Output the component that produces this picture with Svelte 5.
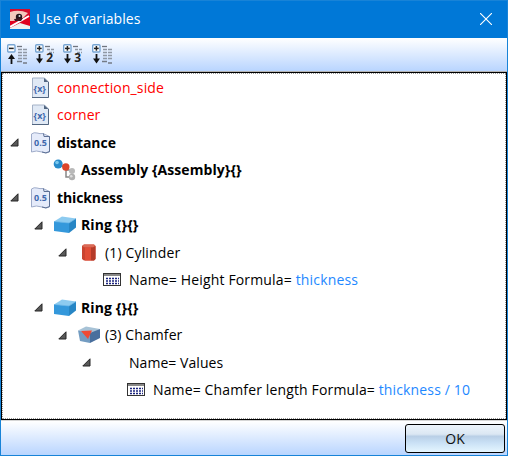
<script lang="ts">
	type Part = { text: string; link?: boolean };
	type Row = {
		depth: number;
		icon: string;
		parts: Part[];
		open?: boolean;
		bold?: boolean;
		missing?: boolean;
		spacing: number;
	};

	const tools = [
		{ name: 'Collapse all', level: '', up: true },
		{ name: 'Expand to level 2', level: '2', up: false },
		{ name: 'Expand to level 3', level: '3', up: false },
		{ name: 'Expand all', level: '', up: false }
	];

	const rows: Row[] = [
		{ depth: 0, icon: 'unknown', parts: [{ text: 'connection_side' }], missing: true, spacing: 0.12 },
		{ depth: 0, icon: 'unknown', parts: [{ text: 'corner' }], missing: true, spacing: 0.05 },
		{ depth: 0, icon: 'number', parts: [{ text: 'distance' }], open: true, bold: true, spacing: -0.05 },
		{ depth: 1, icon: 'assembly', parts: [{ text: 'Assembly {Assembly}{}' }], bold: true, spacing: 0.07 },
		{ depth: 0, icon: 'number', parts: [{ text: 'thickness' }], open: true, bold: true, spacing: -0.12 },
		{ depth: 1, icon: 'part', parts: [{ text: 'Ring {}{}' }], open: true, bold: true, spacing: 0.12 },
		{ depth: 2, icon: 'cylinder', parts: [{ text: '(1) Cylinder' }], open: true, spacing: 0.15 },
		{
			depth: 3,
			icon: 'table',
			parts: [{ text: 'Name= Height Formula= ' }, { text: 'thickness', link: true }],
			spacing: 0.16
		},
		{ depth: 1, icon: 'part', parts: [{ text: 'Ring {}{}' }], open: true, bold: true, spacing: 0.12 },
		{ depth: 2, icon: 'chamfer', parts: [{ text: '(3) Chamfer' }], open: true, spacing: 0.1 },
		{ depth: 3, icon: '', parts: [{ text: 'Name= Values' }], open: true, spacing: 0.05 },
		{
			depth: 4,
			icon: 'table',
			parts: [{ text: 'Name= Chamfer length Formula= ' }, { text: 'thickness / 10', link: true }],
			spacing: 0.14
		}
	];
</script>

<div class="window">
	<header class="titlebar">
		<svg class="logo" width="20" height="20" viewBox="0 0 20 20">
			<rect width="20" height="20" fill="#d40b2b" />
			<path d="M0 3Q9 0 18 4L10 12L0 13Z" fill="#f3c9bd" />
			<path d="M0 12Q9 13 20 5V20H0Z" fill="#df001f" />
			<path d="M0 18L19 7" stroke="#fff" stroke-width="2" />
			<path d="M0 19L10 14L20 17V20H0Z" fill="#eee" />
			<circle cx="9" cy="8" r="3.2" fill="#24151b" />
			<circle cx="9.5" cy="7" r="1" fill="#dce3e8" />
			<path d="M4 10L13 9L11 12H5Z" fill="#421620" />
		</svg>
		<h1>Use of variables</h1>
		<button class="close" aria-label="Close">
			<svg width="12" height="12" viewBox="0 0 12 12">
				<path d="M0 0L12 12M12 0L0 12" stroke="#fff" stroke-width="1.1" />
			</svg>
		</button>
	</header>

	<div class="toolbar">
		{#each tools as tool (tool.name)}
			<button class="tool" class:wide={tool.level === '3'} aria-label={tool.name}>
				<svg width="21" height="21" viewBox="0 0 21 21">
					<rect x=".7" y=".7" width="7.3" height="7.3" rx="1" fill="#fff" stroke="#77a5d3" stroke-width="1.4" />
					<path d="M2 4.4H6.7" stroke="#222" stroke-width="1.5" />
					{#if !tool.up}
						<path d="M4.4 2V6.7" stroke="#222" stroke-width="1.5" />
					{/if}
					{#if tool.up}
						<path d="M4.5 12V20" stroke="#111" stroke-width="1.8" />
						<path d="M4.5 10L8 15H1Z" fill="#111" />
					{:else}
						<path d="M4.5 10V17" stroke="#111" stroke-width="1.8" />
						<path d="M4.5 19.5L8 14.5H1Z" fill="#111" />
					{/if}
					<path d="M10 2.5H15" stroke="#70767f" stroke-width="1.3" />
					{#if tool.level}
						<path d="M12 5.5H19M14 8.5H19" stroke="#9098a4" stroke-width="1.3" stroke-dasharray="3 1" />
						<text x="11.3" y="18">{tool.level}</text>
					{:else}
						<path
							d="M11 5.5H20M11 8.5H20M11 11.5H20M11 14.5H20"
							stroke="#9098a4"
							stroke-width="1.3"
							stroke-dasharray="4 1"
						/>
						<path d="M10 17.5H15M16 19H20" stroke="#747b86" stroke-width="1.3" />
					{/if}
				</svg>
			</button>
		{/each}
	</div>

	<div class="tree" role="tree">
		<div class="focus">
			{#each rows as row}
				<div class="row" style:padding-left="{row.depth * 24}px">
					<span class="arrow">
						{#if row.open}
							<svg width="9" height="9" viewBox="0 0 9 9">
								<path d="M8 .8V8H.8Z" fill="#595959" stroke="#262626" />
							</svg>
						{/if}
					</span>
					<span class="icon">
						{#if row.icon === 'unknown'}
							<svg width="24" height="22" viewBox="0 0 24 22">
								<path d="M3.5 1H15.5L19.5 5V20.5H3.5Z" fill="#e0e9f5" stroke="#a4b2c7" />
								<path d="M3 20.5H19.5V5" fill="none" stroke="#526681" />
								<path d="M15 1V5H19.5Z" fill="#526681" />
								<text class="glyph" x="4.6" y="15">&#123;x&#125;</text>
							</svg>
						{:else if row.icon === 'number'}
							<svg width="24" height="22" viewBox="0 0 24 22">
								<path
									d="M2.5 2Q5 0 8 1T14 1.5L20.5 4.5V20Q17 22 13 20Q7 18 2.5 20Z"
									fill="#e5ebfa"
									stroke="#9eabc9"
								/>
								<path d="M14.5 1.5L15 4.5H20.5V19.5Q17 22 13 20" fill="none" stroke="#5b6f94" />
								<text class="glyph" x="5" y="14">0.5</text>
							</svg>
						{:else if row.icon === 'assembly'}
							<svg width="24" height="22" viewBox="0 0 24 22">
								<path d="M5 5L13 9V18H19M13 11H19" fill="none" stroke="#888" stroke-width="1.5" />
								<circle cx="5.2" cy="5" r="4.5" fill="#278bcb" />
								<circle cx="4" cy="3.5" r="1.8" fill="#79c8ee" />
								<circle cx="12.8" cy="8" r="3.7" fill="#db452b" />
								<circle cx="19" cy="12" r="3" fill="#b9b9b9" />
								<circle cx="19" cy="18" r="3.2" fill="#b0b0b0" />
								<circle cx="18.3" cy="17.3" r="1.3" fill="#ddd" />
							</svg>
						{:else if row.icon === 'part'}
							<svg width="24" height="22" viewBox="0 0 24 22">
								<path d="M1 7.5L9 2.5L23 4.5L16 9Z" fill="#8dcbf0" />
								<path d="M1 7.5L16 9V19L1 17Z" fill="#3498db" />
								<path d="M16 9L23 4.5V13.5L16 19Z" fill="#2786c5" />
								<path d="M1 7.5L16 9L23 4.5" fill="none" stroke="#60b2e5" stroke-width=".7" />
							</svg>
						{:else if row.icon === 'cylinder'}
							<svg width="24" height="22" viewBox="0 0 24 22">
								<path d="M5 4L7 2.5H17L18.5 4V17L17 18.5H7L5 17Z" fill="#c94430" />
								<path d="M5 4L7 2.5H17L18.5 4L16 5.5H8Z" fill="#db6a56" />
								<path d="M8 5.5H14V18.5H8Z" fill="#e04d36" />
								<path d="M14 5.5H16L18.5 4V17L17 18.5H14Z" fill="#b53b29" />
							</svg>
						{:else if row.icon === 'chamfer'}
							<svg width="24" height="22" viewBox="0 0 24 22">
								<path d="M1 6.5L9 2.5L23 5L16 9Z" fill="#a7c2d6" />
								<path d="M1 6.5L13 9V19L3 17Z" fill="#739cc1" />
								<path d="M13 9L23 5V14L13 19Z" fill="#496f9d" />
								<path d="M4 7L15 6.5L11 15Z" fill="#ef4a34" />
							</svg>
						{:else if row.icon === 'table'}
							<svg width="24" height="22" viewBox="0 0 24 22">
								<rect x="2.5" y="4.5" width="17" height="12" fill="#fff" stroke="#333" />
								<path d="M3 6H19" stroke="#888" stroke-width="2" />
								<path
									d="M5 9.5H18M5 12H18M5 14.5H18"
									stroke="#1a237e"
									stroke-width="1.3"
									stroke-dasharray="2 1"
								/>
							</svg>
						{/if}
					</span>
					<span
						class="label"
						class:bold={row.bold}
						class:missing={row.missing}
						style:letter-spacing="{row.spacing}px"
						>{#each row.parts as part}<span class:link={part.link}>{part.text}</span>{/each}</span
					>
				</div>
			{/each}
		</div>
	</div>

	<footer>
		<button class="ok">OK</button>
	</footer>
</div>

<style>
	:global(body) {
		margin: 0;
		overflow: hidden;
	}

	.window {
		box-sizing: border-box;
		display: flex;
		flex-direction: column;
		width: 508px;
		height: 456px;
		border: 1px solid #1883d7;
		background: #fff;
		font-family: 'Open Sans', 'Noto Sans', sans-serif;
	}

	button {
		padding: 0;
		border: 0;
		background: none;
		font-family: inherit;
	}

	/* TITLE BAR */
	.titlebar {
		display: flex;
		align-items: center;
		height: 36px;
		padding: 0 15px 1px 9px;
		background: #0078d7;
		color: #fff;
	}

	h1 {
		flex: 1;
		margin: 0 0 0 6px;
		font-size: 14px;
		font-weight: 400;
		line-height: 20px;
		letter-spacing: 0.05px;
	}

	.close,
	.tool {
		display: flex;
	}

	/* LEVEL BUTTONS */
	.toolbar {
		box-sizing: border-box;
		display: flex;
		gap: 7px;
		height: 34px;
		padding: 6px 6px 0;
		background: linear-gradient(#fff, #b9d5ff);
		border-bottom: 1px solid #b4b4b4;
	}

	.tool.wide {
		margin-right: 1px;
	}

	.tool text {
		font-size: 12px;
		font-weight: 700;
		fill: #222;
	}

	/* VARIABLE TREE */
	.tree {
		box-sizing: border-box;
		height: 348px;
		border: 1px solid #000;
		background: #fff;
	}

	.focus {
		box-sizing: border-box;
		height: 100%;
		border: 1px dotted #999;
	}

	.row {
		display: flex;
		align-items: center;
		height: 27.5px;
	}

	.arrow {
		display: flex;
		width: 9px;
		margin: 0 10px 0 7px;
	}

	.icon {
		display: flex;
		width: 24px;
		margin-right: 4px;
	}

	.glyph {
		font-size: 9px;
		font-weight: 700;
		fill: #3f68ad;
	}

	.label {
		font-size: 14px;
		line-height: 20px;
		white-space: pre;
		color: #000;
	}

	.bold {
		font-weight: 700;
	}

	.missing {
		color: #f00;
	}

	.link {
		color: #1e88ff;
	}

	/* BOTTOM BAR */
	footer {
		box-sizing: border-box;
		display: flex;
		flex: 1;
		justify-content: flex-end;
		align-items: center;
		padding: 1px 2px 0 0;
		background: linear-gradient(#fff, #b9d5ff);
		border-top: 1px solid #d5d5d5;
	}

	.ok {
		box-sizing: border-box;
		width: 100px;
		height: 29px;
		border: 1px solid #000;
		border-radius: 3px;
		background: linear-gradient(#edf4fb 0%, #dbe7f3 34%, #b9cfe6 42%, #c9e0f5 65%, #e5f6ff 100%);
		color: #111;
		font-size: 14px;
	}
</style>
